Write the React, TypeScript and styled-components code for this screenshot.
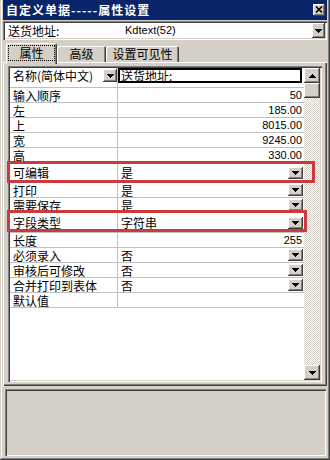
import React from 'react';
import styled, { createGlobalStyle, css } from 'styled-components';

const FACE = '#d4d0c8';

const GlobalStyle = createGlobalStyle`
  html, body { margin: 0; padding: 0; background: ${FACE}; }
  body { font-family: "Noto Sans CJK SC", "Liberation Sans", sans-serif; font-size: 12px; color: #000; }
  * { box-sizing: border-box; }
`;

const raised = css`
  background: ${FACE};
  box-shadow: inset -1px -1px #404040, inset 1px 1px #ffffff, inset -2px -2px #808080, inset 2px 2px ${FACE};
`;

const sunken = css`
  box-shadow: inset 1px 1px #808080, inset 2px 2px #404040, inset -1px -1px #ffffff, inset -2px -2px ${FACE};
`;

const Window = styled.div`
  width: 330px;
  height: 460px;
  background: ${FACE};
  padding: 0 3px 4px 3px;
  display: flex;
  flex-direction: column;
  box-shadow: inset -1px -1px #404040, inset 1px 0 ${FACE}, inset -2px -2px #808080, inset 2px 0 #ffffff;
`;

const TitleBar = styled.div`
  height: 20px;
  flex: none;
  background: #0a246a;
  display: flex;
  align-items: center;
  justify-content: space-between;
  padding: 0 2px 0 3px;
  color: #fff;
  font-weight: bold;
  font-size: 12px;
  letter-spacing: 1px;
  line-height: 20px;
`;

const CloseButton = styled.div`
  ${raised};
  width: 12px;
  height: 12px;
  display: flex;
  align-items: center;
  justify-content: center;
  padding-bottom: 1px;
`;

const Combo = styled.div`
  margin-top: 1px;
  height: 19px;
  flex: none;
  background: #fff;
  ${sunken};
  padding: 2px;
  display: flex;
  align-items: stretch;
`;

const ComboLabel = styled.div`
  width: 120px;
  padding-left: 3px;
  line-height: 15px;
  font-size: 12px;
`;

const ComboValue = styled.div`
  flex: 1;
  font-family: "Liberation Sans", sans-serif;
  font-size: 11px;
  line-height: 15px;
`;

const DropButton = styled.div<{ $w: number; $h: number }>`
  ${raised};
  width: ${p => p.$w}px;
  height: ${p => p.$h}px;
  flex: none;
  display: flex;
  align-items: center;
  justify-content: center;
`;

const TabRow = styled.div`
  margin-top: 3px;
  height: 19px;
  flex: none;
  display: flex;
  align-items: flex-end;
  padding-left: 3px;
  position: relative;
  z-index: 2;
`;

const Tab = styled.div<{ $selected?: boolean; $w: number }>`
  width: ${p => p.$w}px;
  height: ${p => (p.$selected ? 21 : 16)}px;
  margin-bottom: ${p => (p.$selected ? -2 : 0)}px;
  background: ${FACE};
  border-top-left-radius: 2px;
  border-top-right-radius: 2px;
  box-shadow: inset 1px 1px #ffffff, inset -1px 0 #404040, inset -2px 0 #808080;
  display: flex;
  align-items: ${p => (p.$selected ? 'flex-start' : 'center')};
  justify-content: center;
  padding: ${p => (p.$selected ? '2px 2px 0 2px' : '0 2px')};
  font-size: 12px;
  line-height: 14px;
`;

const FocusLabel = styled.span`
  display: block;
  width: 100%;
  height: 16px;
  border: 1px dotted #000;
  text-align: center;
  line-height: 14px;
`;

const TabPanel = styled.div`
  flex: 1;
  min-height: 0;
  background: ${FACE};
  box-shadow: inset 1px 1px #ffffff, inset -1px -1px #404040, inset -2px -2px #808080;
  padding: 4px 5px 4px 5px;
  display: flex;
  position: relative;
  z-index: 1;
`;

const Grid = styled.div`
  flex: 1;
  background: #fff;
  ${sunken};
  padding: 2px;
  display: flex;
`;

const Rows = styled.div`
  flex: 1;
  display: flex;
  flex-direction: column;
  position: relative;
  z-index: 2;
`;

const Row = styled.div<{ $h: number; $top?: boolean }>`
  height: ${p => p.$h}px;
  flex: none;
  display: flex;
  align-items: ${p => (p.$top ? 'flex-start' : 'center')};
  border-bottom: 1px solid #c0c0c0;
  position: relative;
`;

const NameCell = styled.div`
  width: 108px;
  align-self: stretch;
  border-right: 1px solid #c0c0c0;
  padding-left: 3px;
  display: flex;
  align-items: center;
  justify-content: space-between;
  font-size: 12px;
  line-height: 13px;
  white-space: nowrap;
`;

const NameCellTop = styled(NameCell)`
  align-items: flex-start;
  padding-top: 1px;
`;

const ValueCell = styled.div<{ $align: 'left' | 'right' | 'split' }>`
  flex: 1;
  align-self: stretch;
  display: flex;
  align-items: center;
  justify-content: ${p => (p.$align === 'right' ? 'flex-end' : 'space-between')};
  padding-left: 3px;
  padding-right: ${p => (p.$align === 'right' ? 2 : 1)}px;
  font-size: 12px;
  line-height: 13px;
  white-space: nowrap;
`;

const NumberText = styled.span`
  font-family: "Liberation Sans", sans-serif;
  font-size: 11px;
`;

const EditBox = styled.div`
  flex: 1;
  height: 15px;
  margin-right: 1px;
  border: 2px solid #000;
  background: #fff;
  padding-left: 1px;
  font-size: 12px;
  line-height: 11px;
  overflow: hidden;
`;

const RedBox = styled.div<{ $t: number; $r: number; $b: number; $l: number }>`
  position: absolute;
  top: ${p => p.$t}px;
  right: ${p => p.$r}px;
  bottom: ${p => p.$b}px;
  left: ${p => p.$l}px;
  border: 3px solid #cc3a3e;
  pointer-events: none;
  z-index: 3;
`;

const ScrollBar = styled.div`
  width: 16px;
  flex: none;
  display: flex;
  flex-direction: column;
  background-color: ${FACE};
  background-image: conic-gradient(#ffffff 25%, ${FACE} 0 50%, #ffffff 0 75%, ${FACE} 0);
  background-size: 2px 2px;
  position: relative;
  z-index: 1;
`;

const ScrollButton = styled.div`
  ${raised};
  width: 16px;
  height: 15px;
  flex: none;
  display: flex;
  align-items: center;
  justify-content: center;
`;

const Thumb = styled.div`
  ${raised};
  width: 16px;
  height: 15px;
  flex: none;
`;

const Track = styled.div`
  flex: 1;
`;

const BottomPanel = styled.div`
  margin: 3px 1px 0 2px;
  height: 67px;
  flex: none;
  background: ${FACE};
  box-shadow: inset 1px 1px #808080, inset 2px 2px #404040, inset -1px -1px #ffffff;
`;

const Arrow = ({ up }: { up?: boolean }) => (
  <svg width="7" height="4" viewBox="0 0 7 4" shapeRendering="crispEdges" style={{ display: 'block' }}>
    {up ? (
      <path d="M3 0h1v1h1v1h1v1h1v1H0V3h1V2h1V1h1z" fill="#000" />
    ) : (
      <path d="M0 0h7v1H6v1H5v1H4v1H3V3H2V2H1V1H0z" fill="#000" />
    )}
  </svg>
);

type Item = {
  name: string;
  value?: string;
  kind: 'num' | 'drop' | 'text' | 'empty';
  h: number;
  red?: { t: number; r: number; b: number; l: number };
};

const items: Item[] = [
  { name: '输入顺序', value: '50', kind: 'num', h: 15 },
  { name: '左', value: '185.00', kind: 'num', h: 15 },
  { name: '上', value: '8015.00', kind: 'num', h: 15 },
  { name: '宽', value: '9245.00', kind: 'num', h: 15 },
  { name: '高', value: '330.00', kind: 'num', h: 15 },
  { name: '可编辑', value: '是', kind: 'drop', h: 20, red: { t: -2, r: -11, b: -1, l: -3 } },
  { name: '打印', value: '是', kind: 'drop', h: 15 },
  { name: '需要保存', value: '是', kind: 'drop', h: 15 },
  { name: '字段类型', value: '字符串', kind: 'drop', h: 20, red: { t: -3, r: -3, b: 0, l: -3 } },
  { name: '长度', value: '255', kind: 'num', h: 15 },
  { name: '必须录入', value: '否', kind: 'drop', h: 15 },
  { name: '审核后可修改', value: '否', kind: 'drop', h: 15 },
  { name: '合并打印到表体', value: '否', kind: 'drop', h: 15 },
  { name: '默认值', kind: 'empty', h: 15 },
];

export default function App() {
  return (
    <>
      <GlobalStyle />
      <Window>
        <TitleBar>
          <span>自定义单据-----属性设置</span>
          <CloseButton>
            <svg width="8" height="7" viewBox="0 0 8 7">
              <path d="M1 0.5 L7 6.5 M7 0.5 L1 6.5" stroke="#000" strokeWidth="1.6" />
            </svg>
          </CloseButton>
        </TitleBar>
        <Combo>
          <ComboLabel>送货地址:</ComboLabel>
          <ComboValue>Kdtext(52)</ComboValue>
          <DropButton $w={13} $h={15}>
            <Arrow />
          </DropButton>
        </Combo>
        <TabRow>
          <Tab $selected $w={51}>
            <FocusLabel>属性</FocusLabel>
          </Tab>
          <Tab $w={49}>高级</Tab>
          <Tab $w={73}>设置可见性</Tab>
        </TabRow>
        <TabPanel>
          <Grid>
            <Rows>
              <Row $h={20} $top>
                <NameCellTop>
                  <span>名称(简体中文)</span>
                  <DropButton $w={14} $h={13}>
                    <Arrow />
                  </DropButton>
                </NameCellTop>
                <ValueCell $align="left" style={{ alignItems: 'flex-start', paddingLeft: 0 }}>
                  <EditBox>送货地址:</EditBox>
                </ValueCell>
              </Row>
              {items.map(it => (
                <Row key={it.name} $h={it.h}>
                  <NameCell>{it.name}</NameCell>
                  {it.kind === 'num' && (
                    <ValueCell $align="right">
                      <NumberText>{it.value}</NumberText>
                    </ValueCell>
                  )}
                  {it.kind === 'drop' && (
                    <ValueCell $align="split">
                      <span>{it.value}</span>
                      <DropButton $w={15} $h={12}>
                        <Arrow />
                      </DropButton>
                    </ValueCell>
                  )}
                  {(it.kind === 'empty' || it.kind === 'text') && <ValueCell $align="left" />}
                  {it.red && <RedBox $t={it.red.t} $r={it.red.r} $b={it.red.b} $l={it.red.l} />}
                </Row>
              ))}
            </Rows>
            <ScrollBar>
              <ScrollButton>
                <Arrow up />
              </ScrollButton>
              <Thumb />
              <Track />
              <ScrollButton>
                <Arrow />
              </ScrollButton>
            </ScrollBar>
          </Grid>
        </TabPanel>
        <BottomPanel />
      </Window>
    </>
  );
}
